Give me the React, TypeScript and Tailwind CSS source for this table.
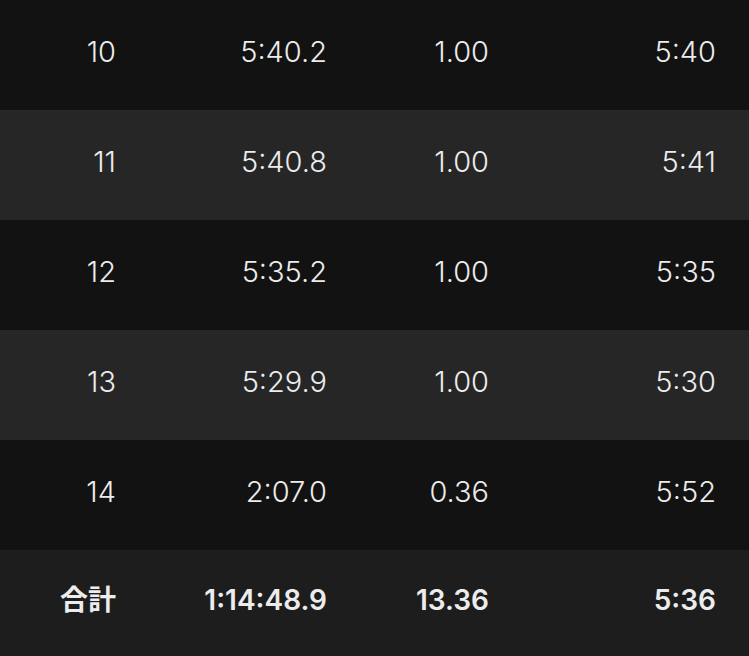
import React from "react";

const rows = [
  ["10", "5:40.2", "1.00", "5:40"],
  ["11", "5:40.8", "1.00", "5:41"],
  ["12", "5:35.2", "1.00", "5:35"],
  ["13", "5:29.9", "1.00", "5:30"],
  ["14", "2:07.0", "0.36", "5:52"],
];

export default function App() {
  return (
    <div
      className="w-[749px] h-[656px] overflow-hidden bg-[#121212] text-[#ececec]"
      style={{ fontFamily: 'Inter, "Noto Sans CJK JP", sans-serif' }}
    >
      {rows.map((r, i) => (
        <div
          key={i}
          className={`grid grid-cols-[116px_211px_162px_227px] h-[110px] items-center pb-[8px] text-[29px] font-light ${
            i % 2 === 1 ? "bg-[#262626]" : "bg-[#121212]"
          }`}
        >
          {r.map((c, j) => (
            <div key={j} className="text-right leading-none">
              {c}
            </div>
          ))}
        </div>
      ))}
      <div className="grid grid-cols-[116px_211px_162px_227px] h-[110px] items-center pb-[10px] text-[28px] font-semibold bg-[#1d1d1d]">
        <div className="text-right leading-none">合計</div>
        <div className="text-right leading-none">1:14:48.9</div>
        <div className="text-right leading-none">13.36</div>
        <div className="text-right leading-none">5:36</div>
      </div>
    </div>
  );
}
